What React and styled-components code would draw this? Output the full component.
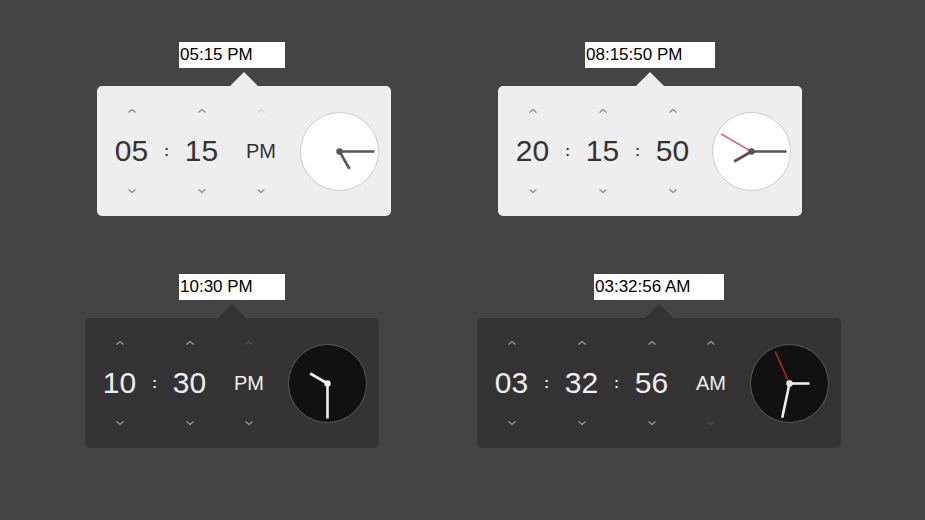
import styled, { createGlobalStyle, css } from "styled-components";

const GlobalStyle = createGlobalStyle`
  html, body {
    margin: 0;
    padding: 0;
    background: #444444;
    font-family: "Liberation Sans", Arial, sans-serif;
  }
`;

const pickers = [
  {
    id: 1,
    dark: false,
    text: "05:15 PM",
    inputWidth: 106,
    inputX: 179,
    popupX: 97,
    fields: ["05", "15"],
    meridiem: "PM",
    hour: 5,
    minute: 15,
  },
  {
    id: 2,
    dark: false,
    text: "08:15:50 PM",
    inputWidth: 130,
    inputX: 123,
    popupX: 36,
    fields: ["20", "15", "50"],
    hour: 8,
    minute: 15,
    second: 50,
  },
  {
    id: 3,
    dark: true,
    text: "10:30 PM",
    inputWidth: 106,
    inputX: 179,
    popupX: 85,
    fields: ["10", "30"],
    meridiem: "PM",
    hour: 10,
    minute: 30,
  },
  {
    id: 4,
    dark: true,
    text: "03:32:56 AM",
    inputWidth: 130,
    inputX: 132,
    popupX: 15,
    fields: ["03", "32", "56"],
    meridiem: "AM",
    hour: 3,
    minute: 32,
    second: 56,
  },
];

//chevron arrow (up / down)
const Chevron = ({ down }) => (
  <svg width="10" height="6" viewBox="0 0 10 6">
    <polyline
      points={down ? "1.5,1.5 5,4.5 8.5,1.5" : "1.5,4.5 5,1.5 8.5,4.5"}
      fill="none"
      stroke="currentColor"
      strokeWidth="1.3"
    />
  </svg>
);

const hand = (a, len) => {
  const r = (a * Math.PI) / 180;
  return { x2: 39.5 + len * Math.sin(r), y2: 39.5 - len * Math.cos(r) };
};

const Clock = ({ dark, hour, minute, second }) => {
  const handColor = dark ? "#eeeeee" : "#555555";
  const h = hand(hour * 30, 20);
  const m = hand(minute * 6, 35);
  const s = second != null ? hand(second * 6, 35) : null;
  return (
    <ClockFace width="79" height="79" viewBox="0 0 79 79">
      <circle
        cx="39.5"
        cy="39.5"
        r="39"
        fill={dark ? "#111111" : "#ffffff"}
        stroke={dark ? "#5a5a5a" : "#cccccc"}
        strokeWidth="1"
      />
      <line x1="39.5" y1="39.5" {...h} stroke={handColor} strokeWidth="2.6" />
      <line x1="39.5" y1="39.5" {...m} stroke={handColor} strokeWidth="2.6" />
      {s && (
        <line
          x1="39.5"
          y1="39.5"
          {...s}
          stroke={dark ? "#b0262a" : "#e06a6a"}
          strokeWidth="1.6"
        />
      )}
      <circle cx="39.5" cy="39.5" r="3.2" fill={handColor} />
    </ClockFace>
  );
};

const Spinner = ({ value, meridiem, dark, upOff, downOff }) => (
  <Column $meridiem={meridiem}>
    <Arrow $dark={dark} $off={upOff}>
      <Chevron />
    </Arrow>
    <Value $meridiem={meridiem} $dark={dark}>
      {value}
    </Value>
    <Arrow $dark={dark} $off={downOff}>
      <Chevron down />
    </Arrow>
  </Column>
);

const TimePicker = ({ p }) => (
  <Cell>
    <Field
      readOnly
      value={p.text}
      $width={p.inputWidth}
      style={{ marginLeft: p.inputX }}
    />
    <Popup style={{ marginLeft: p.popupX }}>
      <Caret $dark={p.dark} />
      <Panel $dark={p.dark}>
        {p.fields.map((f, i) => (
          <Group key={i}>
            {i > 0 && <Separator $dark={p.dark}>:</Separator>}
            <Spinner value={f} dark={p.dark} />
          </Group>
        ))}
        {p.meridiem && (
          <Spinner
            value={p.meridiem}
            meridiem
            dark={p.dark}
            upOff={p.meridiem === "PM"}
            downOff={p.meridiem === "AM"}
          />
        )}
        <Clock
          dark={p.dark}
          hour={p.hour}
          minute={p.minute}
          second={p.second}
        />
      </Panel>
    </Popup>
  </Cell>
);

const App = () => (
  <>
    <GlobalStyle />
    <Page>
      {pickers.map((p) => (
        <TimePicker key={p.id} p={p} />
      ))}
    </Page>
  </>
);

export default App;

const Page = styled.div`
  width: 925px;
  height: 520px;
  box-sizing: border-box;
  padding-top: 42px;
  display: grid;
  grid-template-columns: 462px 463px;
  grid-template-rows: 174px 174px;
  row-gap: 58px;
`;

const Cell = styled.div`
  display: flex;
  flex-direction: column;
  align-items: flex-start;
`;

const Field = styled.input`
  width: ${(p) => p.$width}px;
  height: 26px;
  box-sizing: border-box;
  border: none;
  outline: none;
  margin: 0;
  padding: 0 0 0 1px;
  background: #ffffff;
  color: #000000;
  font-family: "Liberation Sans", Arial, sans-serif;
  font-size: 17px;
`;

const Popup = styled.div`
  margin-top: 4px;
  display: flex;
  flex-direction: column;
`;

const Caret = styled.div`
  align-self: center;
  width: 0;
  height: 0;
  border-left: 14px solid transparent;
  border-right: 14px solid transparent;
  border-bottom: 14px solid ${(p) => (p.$dark ? "#333333" : "#eeeeee")};
`;

const Panel = styled.div`
  display: flex;
  align-items: center;
  height: 130px;
  padding: 0 11.5px;
  border-radius: 5px;
  background: ${(p) => (p.$dark ? "#333333" : "#eeeeee")};
`;

const Group = styled.div`
  display: flex;
  align-items: center;
`;

const Column = styled.div`
  width: 46px;
  height: 130px;
  display: grid;
  grid-template-rows: 50px 30px 50px;
  justify-items: center;
  align-items: center;
  ${(p) =>
    p.$meridiem &&
    css`
      margin-left: 13.5px;
    `}
`;

const Arrow = styled.div`
  display: flex;
  color: ${(p) =>
    p.$dark ? (p.$off ? "#4e4e4e" : "#9a9a9a") : p.$off ? "#d2d2d2" : "#8a8a8a"};
`;

const Value = styled.div`
  font-size: ${(p) => (p.$meridiem ? "20px" : "30px")};
  line-height: 30px;
  color: ${(p) => (p.$dark ? "#eeeeee" : "#333333")};
`;

const Separator = styled.div`
  width: 24px;
  text-align: center;
  font-size: 14px;
  font-weight: bold;
  line-height: 14px;
  color: ${(p) => (p.$dark ? "#eeeeee" : "#333333")};
`;

const ClockFace = styled.svg`
  display: block;
  margin-left: 16px;
  flex-shrink: 0;
`;
